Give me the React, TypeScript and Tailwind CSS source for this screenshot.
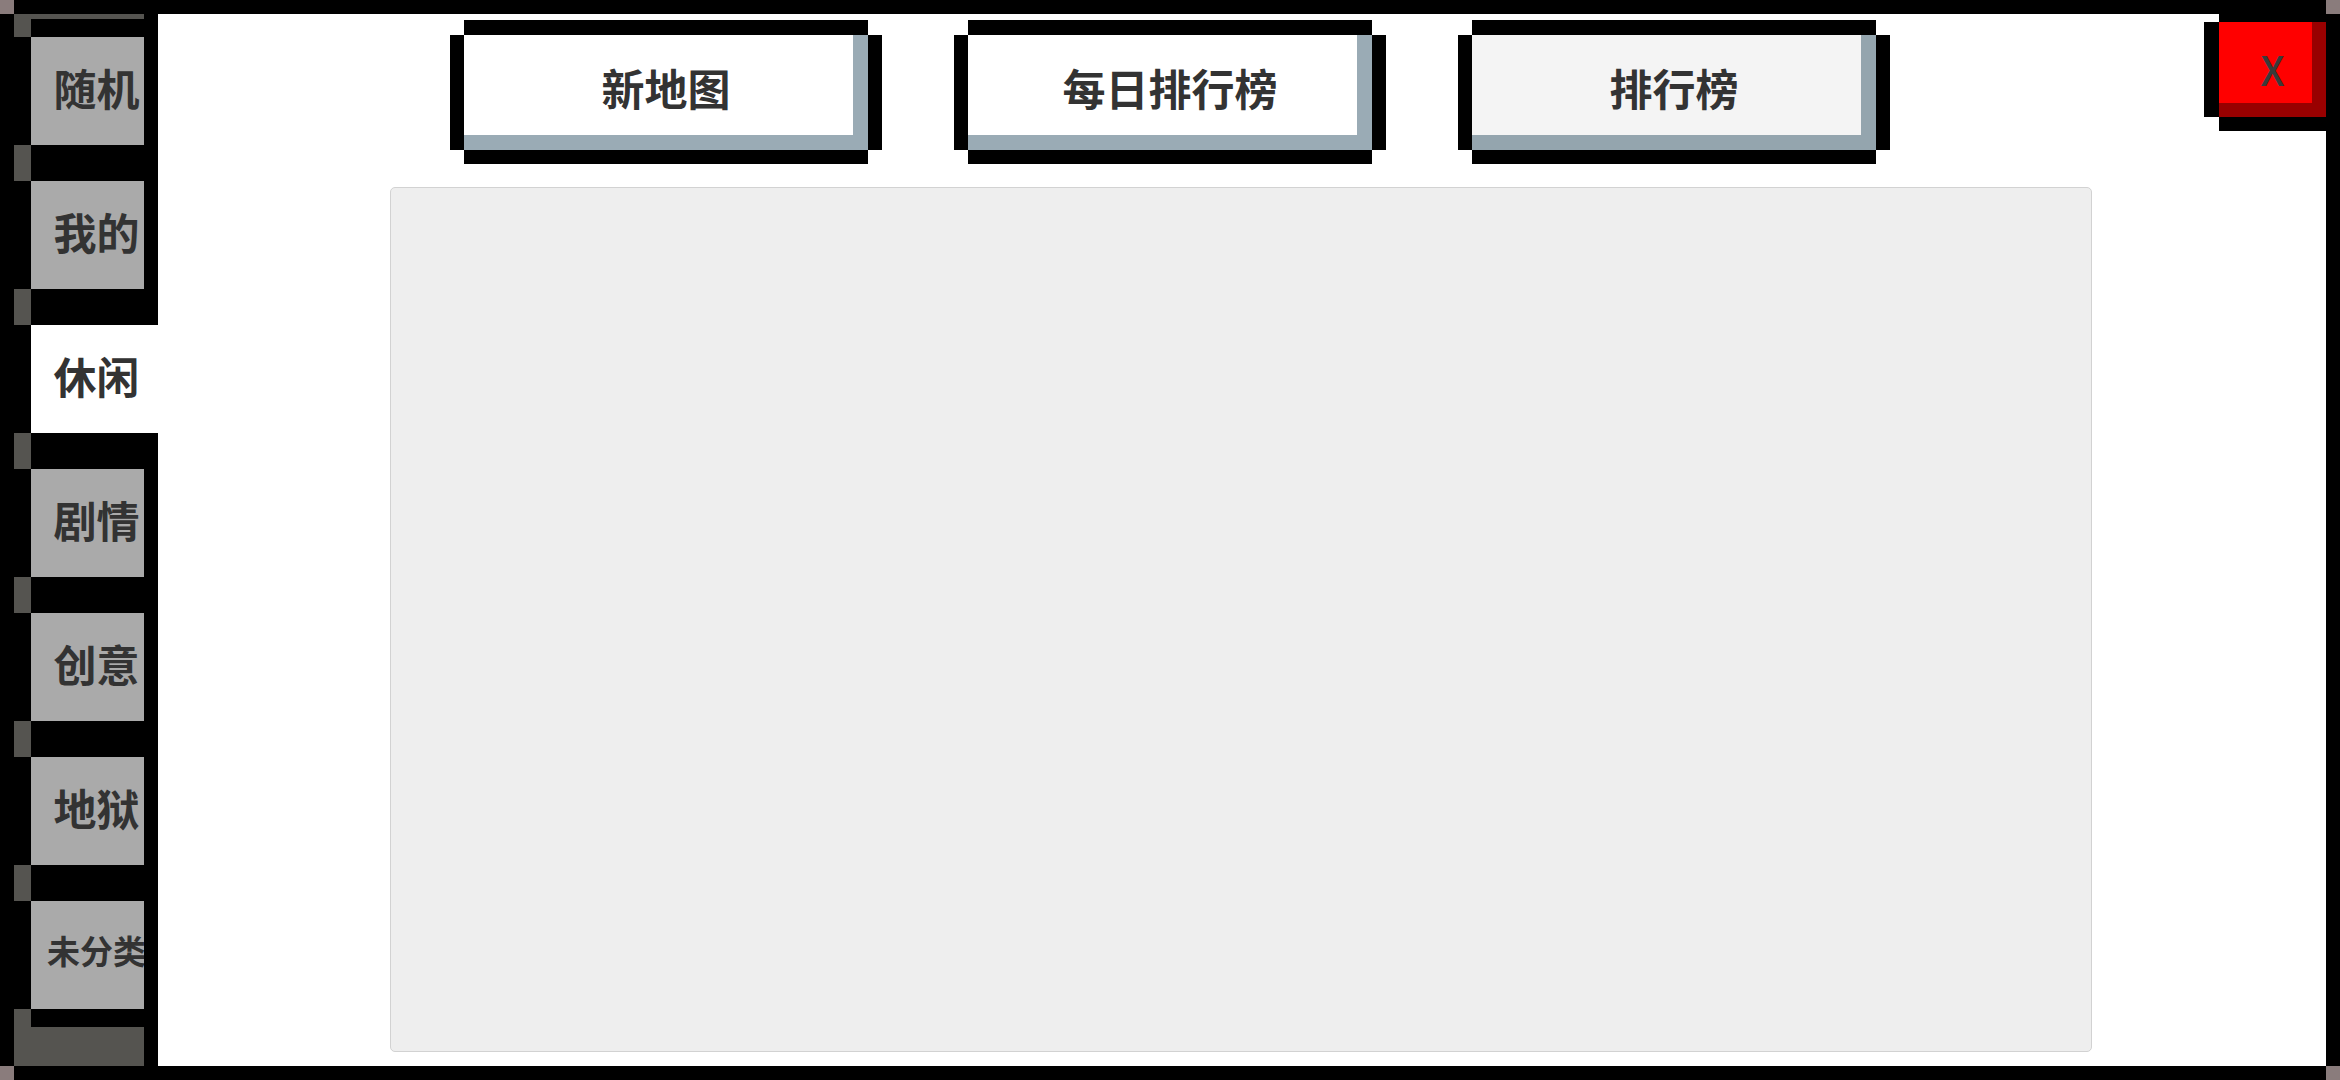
import React from "react";

const items = ["随机", "我的", "休闲", "剧情", "创意", "地狱", "未分类"];
const tabs = ["新地图", "每日排行榜", "排行榜"];

export default function App() {
  return (
    <div className="flex h-[1080px] w-[2340px] items-center justify-center bg-[#8a7c7c] font-['Noto_Sans_CJK_SC','Noto_Sans',sans-serif] text-[#333]">
      <div className="flex h-[1052px] w-[2312px] shadow-[0_-14px_0_0_#000,0_14px_0_0_#000,-14px_0_0_0_#000,14px_0_0_0_#000]">
        {/* Sidebar */}
        <div className="flex w-[144px] shrink-0 flex-col bg-black">
          <div className="flex h-[23px]">
            <div className="w-[17px] bg-[#555450]" />
            <div className="h-[5px] w-[113px] bg-[#555450]" />
          </div>
          {items.map((label, i) => {
            const active = i === 2;
            const small = label.length > 2;
            return (
              <React.Fragment key={label}>
                <div className="flex h-[108px]">
                  <div className="w-[17px]" />
                  {active ? (
                    <div className="flex w-[127px] items-center justify-center overflow-hidden whitespace-nowrap bg-white pb-[8px] pl-[18px] pr-[14px] text-[43px] font-bold">
                      {label}
                    </div>
                  ) : (
                    <div
                      className={
                        small
                          ? "flex w-[113px] items-center justify-center overflow-hidden whitespace-nowrap bg-[#aaaaaa] pb-[8px] pl-[18px] text-[33px] font-bold"
                          : "flex w-[113px] items-center justify-center overflow-hidden whitespace-nowrap bg-[#aaaaaa] pb-[8px] pl-[18px] text-[43px] font-bold"
                      }
                    >
                      {label}
                    </div>
                  )}
                </div>
                {i < items.length - 1 && <div className="h-[36px] w-[17px] bg-[#555450]" />}
              </React.Fragment>
            );
          })}
          <div className="h-[18px] w-[17px] bg-[#555450]" />
          <div className="h-[39px] w-[130px] bg-[#555450]" />
        </div>

        {/* Content */}
        <div className="relative flex flex-1 flex-col bg-white">
          <div className="flex gap-[100px] pl-[306px] pt-[21px]">
            {tabs.map((t, i) => (
              <div
                key={t}
                className={
                  i === 2
                    ? "flex h-[115px] w-[404px] items-center justify-center bg-[#f4f4f4] pb-[10px] text-[43px] font-bold shadow-[inset_-15px_-15px_0_0_#94a5ae,0_-15px_0_0_#000,0_14px_0_0_#000,-14px_0_0_0_#000,14px_0_0_0_#000]"
                    : "flex h-[115px] w-[404px] items-center justify-center bg-white pb-[10px] text-[43px] font-bold shadow-[inset_-15px_-15px_0_0_#9aabb5,0_-15px_0_0_#000,0_14px_0_0_#000,-14px_0_0_0_#000,14px_0_0_0_#000]"
                }
              >
                {t}
              </div>
            ))}
          </div>
          <div className="mb-[14px] ml-[232px] mt-[37px] w-[1702px] flex-1 rounded-[5px] border border-[#d2d2d2] bg-[#eeeeee]" />

          <div className="absolute right-0 top-[8px] flex h-[95px] w-[107px] items-center justify-center bg-[#ff0000] pb-[2px] text-[41px] font-medium text-[#3a3a3a] shadow-[inset_-14px_-14px_0_0_#990000,0_-14px_0_0_#000,0_14px_0_0_#000,-15px_0_0_0_#000,14px_0_0_0_#000]">
            X
          </div>
        </div>
      </div>
    </div>
  );
}
